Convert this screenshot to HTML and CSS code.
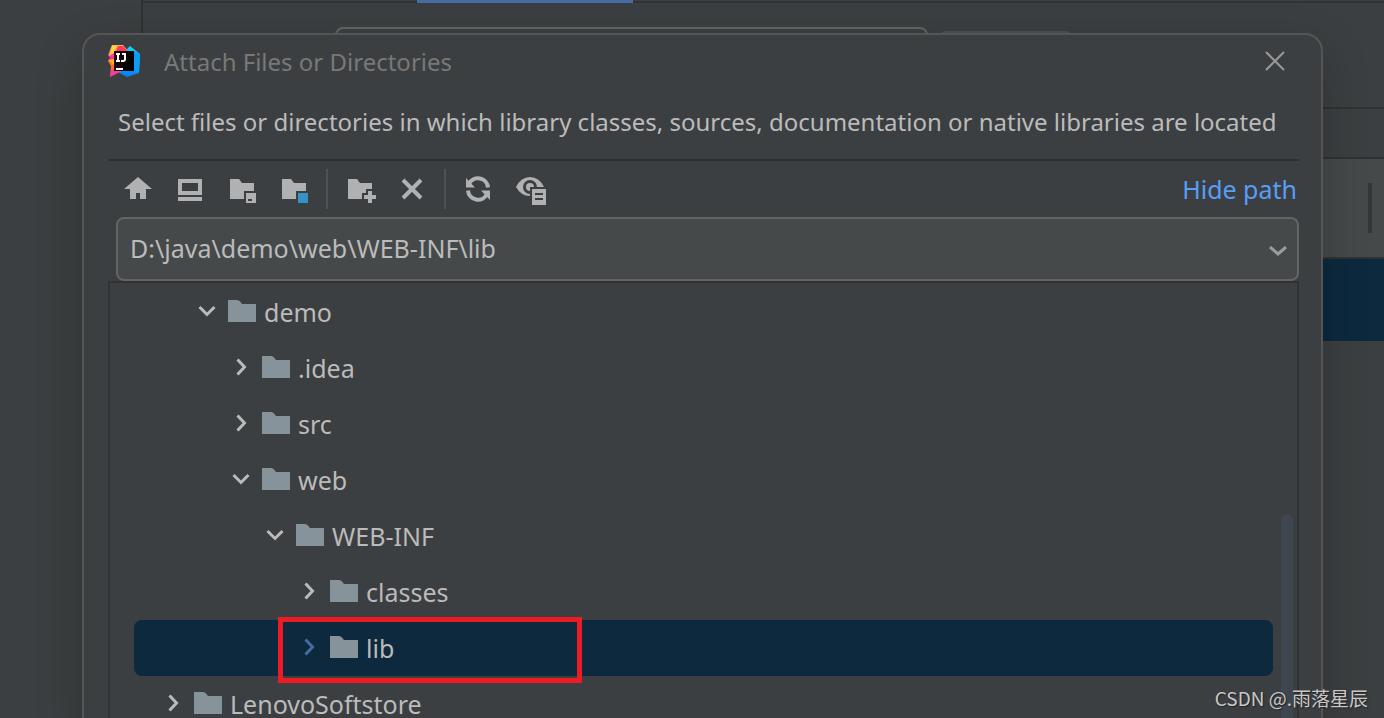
FILE: index.html
```html
<!DOCTYPE html>
<html lang="en">

<head>
    <meta charset="utf-8">
    <title>Attach Files or Directories</title>
    <link rel="stylesheet" href="styles.css">
</head>

<body>
    <svg class="defs" aria-hidden="true">
        <symbol id="folder" viewBox="0 0 28 28">
            <path fill="currentColor" d="M0 2h9q2 0 3 1.5L14 6h14v18H0z"/>
        </symbol>
        <symbol id="right" viewBox="0 0 24 28">
            <path fill="none" stroke="currentColor" stroke-width="3" d="M7.500 5.500l7 7.500l-7 7.500"/>
        </symbol>
        <symbol id="down" viewBox="0 0 24 28">
            <path fill="none" stroke="currentColor" stroke-width="3" d="M3.500 9l7.500 7.500L18.500 9"/>
        </symbol>
    </svg>

    <div class="screen">
        <div class="backdrop">
            <div class="side"></div>
            <div class="main">
                <div class="tabs"><div class="tab"></div></div>
                <div class="fields">
                    <div class="field"></div>
                    <div class="chip"></div>
                </div>
                <div class="strip"></div>
                <div class="bar"><div class="grip"></div></div>
                <div class="current"></div>
            </div>
        </div>

        <div class="dialog" role="dialog" aria-labelledby="title">
            <header class="titlebar">
                <svg class="logo" viewBox="0 0 32 32">
                    <defs>
                        <linearGradient id="warm" x1="0" y1="0" x2="0" y2="1">
                            <stop offset="0" stop-color="#fdb850"/>
                            <stop offset=".4" stop-color="#fa28b8"/>
                            <stop offset=".6" stop-color="#fc801d"/>
                            <stop offset="1" stop-color="#fe2d6c"/>
                        </linearGradient>
                        <linearGradient id="cool" x1="0" y1="0" x2="0" y2="1">
                            <stop offset="0" stop-color="#0fd8f8"/>
                            <stop offset="1" stop-color="#087cfa"/>
                        </linearGradient>
                        <linearGradient id="tile">
                            <stop offset="0" stop-color="#2a0814"/>
                            <stop offset=".5" stop-color="#000"/>
                        </linearGradient>
                    </defs>
                    <path fill="url(#cool)" d="M16 7L22 1l10 8-1 19-12 4-9-5z"/>
                    <path fill="#0c9cf4" d="M26 6l6 3-1 19-5-3z"/>
                    <path fill="url(#warm)" d="M4 0h11l5 6-10 17-8 9 1-11-3-5 2-3-2-3z"/>
                    <path fill="#fd3a5e" d="M10 1h5l5 6H8z"/>
                    <path fill="#fdd23a" d="M4 1l5 0-3 7-5 3z"/>
                    <path fill="#fdb60d" d="M0 15l6-1v6z"/>
                    <path fill="#f0419e" d="M6 26l8 0-12 6 1-7z"/>
                    <path fill="url(#tile)" d="M6 6h20v20H6z"/>
                    <path fill="none" stroke="#fff" stroke-width="2" d="M8 9h4M10 9v7M8 16h4M14 9h3v5q0 2-2 2h-2M8 24h7"/>
                </svg>
                <h1 class="title" id="title">Attach Files or Directories</h1>
                <button class="close" aria-label="Close">
                    <svg viewBox="0 0 20 20"><path fill="none" stroke="currentColor" stroke-width="2" d="M1 1l18 18M19 1L1 19"/></svg>
                </button>
            </header>

            <p class="message">Select files or directories in which library classes, sources, documentation or native libraries are located</p>

            <div class="toolbar">
                <button class="tool" aria-label="Home">
                    <svg viewBox="0 0 32 32"><path d="M16 4l14 12h-6v10h-6v-6h-4v6H8V16H2z"/></svg>
                </button>
                <button class="tool" aria-label="Desktop">
                    <svg viewBox="0 0 32 32"><path fill-rule="evenodd" d="M4 6h24v16H4zM8 10v8h16v-8zM4 24h24v4H4z"/></svg>
                </button>
                <button class="tool" aria-label="Project directory">
                    <svg viewBox="0 0 32 32"><path fill-rule="evenodd" d="M4 6h9l3 4h12v8H18v8H4zM20 20h10v10H20zM22 26v2h4v-2z"/></svg>
                </button>
                <button class="tool" aria-label="Module directory">
                    <svg viewBox="0 0 32 32"><path d="M4 6h9l3 4h12v8H18v8H4z"/><path class="accent" d="M20 20h10v10H20z"/></svg>
                </button>
                <span class="separator"></span>
                <button class="tool" aria-label="New folder">
                    <svg viewBox="0 0 32 32"><path d="M4 6h9l3 4h12v6h-6v4h-4v6H4zM24 18h4v4h4v4h-4v4h-4v-4h-4v-4h4z"/></svg>
                </button>
                <button class="tool" aria-label="Delete">
                    <svg viewBox="0 0 32 32"><path fill="none" stroke="currentColor" stroke-width="4" d="M7 7l18 18M25 7L7 25"/></svg>
                </button>
                <span class="separator"></span>
                <button class="tool" aria-label="Refresh">
                    <svg viewBox="0 0 32 32">
                        <path fill="none" stroke="currentColor" stroke-width="4" d="M7 11A10 10 0 0 1 26 14.500M25 21A10 10 0 0 1 6 17.500"/>
                        <path d="M4 5l9 9.500H4zM28 27l-9-9.500h9z"/>
                    </svg>
                </button>
                <button class="tool" aria-label="Show hidden files">
                    <svg viewBox="0 0 32 32">
                        <path fill-rule="evenodd" d="M2 14Q7 4 16 4t14 10q-5 9-14 9T2 14zM16 7a7 7 0 1 0 0 14a7 7 0 0 0 0-14z"/>
                        <circle cx="16" cy="14" r="4"/>
                        <path class="gap" d="M16 14h16v18H16z"/>
                        <path fill-rule="evenodd" d="M18 16h14v16H18zM21 20v2h8v-2zM21 25v2h8v-2z"/>
                    </svg>
                </button>
                <a class="link" href="#path">Hide path</a>
            </div>

            <div class="combo">
                <input class="path" id="path" type="text" aria-label="Path" value="D:\java\demo\web\WEB-INF\lib">
                <button class="open" aria-label="Recent paths">
                    <svg viewBox="0 0 18 10"><path fill="none" stroke="currentColor" stroke-width="3" d="M1 1l8 7 8-7"/></svg>
                </button>
            </div>

            <div class="tree">
                <ul class="rows">
                    <li class="row level-1"><button class="toggle" aria-label="Collapse demo"><svg><use href="#down"/></svg></button><svg class="folder"><use href="#folder"/></svg>demo</li>
                    <li class="row level-2"><button class="toggle" aria-label="Expand .idea"><svg><use href="#right"/></svg></button><svg class="folder"><use href="#folder"/></svg>.idea</li>
                    <li class="row level-2"><button class="toggle" aria-label="Expand src"><svg><use href="#right"/></svg></button><svg class="folder"><use href="#folder"/></svg>src</li>
                    <li class="row level-2"><button class="toggle" aria-label="Collapse web"><svg><use href="#down"/></svg></button><svg class="folder"><use href="#folder"/></svg>web</li>
                    <li class="row level-3"><button class="toggle" aria-label="Collapse WEB-INF"><svg><use href="#down"/></svg></button><svg class="folder"><use href="#folder"/></svg>WEB-INF</li>
                    <li class="row level-4"><button class="toggle" aria-label="Expand classes"><svg><use href="#right"/></svg></button><svg class="folder"><use href="#folder"/></svg>classes</li>
                    <li class="row level-4 selected"><button class="toggle" aria-label="Expand lib"><svg><use href="#right"/></svg></button><svg class="folder"><use href="#folder"/></svg>lib<span class="marker"></span></li>
                    <li class="row level-0"><button class="toggle" aria-label="Expand LenovoSoftstore"><svg><use href="#right"/></svg></button><svg class="folder"><use href="#folder"/></svg>LenovoSoftstore</li>
                </ul>
                <div class="scrollbar"></div>
            </div>
        </div>

        <div class="watermark">CSDN @.雨落星辰</div>
    </div>
</body>

</html>
```

FILE: styles.css
```css
* {
    box-sizing: border-box;
}

body {
    margin: 0;
    background-color: #3c3f41;
    color: #bbb;
    font-family: "Noto Sans", "Open Sans", sans-serif;
    font-size: 25px;
}

button {
    padding: 0;
    border: 0;
    background: none;
    color: inherit;
    display: flex;
}

.defs {
    display: none;
}

.screen {
    position: relative;
    height: 100vh;
    overflow: hidden;
}

/* window behind the dialog */

.backdrop {
    display: flex;
    height: 100%;
}

.side {
    width: 143px;
    border-right: 2px solid #323232;
}

.main {
    flex: 1;
}

.tabs {
    height: 3px;
    padding-left: 274px;
    border-bottom: 2px solid #323232;
}

.tab {
    width: 216px;
    height: 3px;
    background-color: #466ba1;
}

.fields {
    display: flex;
    align-items: flex-start;
    gap: 12px;
    height: 104px;
    padding: 24px 0 0 192px;
}

.field {
    width: 593px;
    height: 60px;
    border: 2px solid #646464;
    border-radius: 8px;
}

.chip {
    width: 132px;
    height: 52px;
    margin-top: 4px;
    border-radius: 6px;
    background-color: #4c5052;
}

.strip {
    height: 52px;
    border: solid #323232;
    border-width: 2px 0;
}

.bar {
    display: flex;
    align-items: center;
    justify-content: flex-end;
    height: 100px;
    padding-right: 12px;
    border-bottom: 2px solid #323232;
    background-color: #45494a;
}

.grip {
    width: 4px;
    height: 50px;
    background-color: #35383a;
}

.current {
    height: 82px;
    background-color: #0d293e;
}

/* dialog */

.dialog {
    position: absolute;
    top: 33px;
    left: 82px;
    right: 61px;
    padding: 0 22px 0 24px;
    border: 2px solid #555;
    border-radius: 18px;
    background-color: #3c3f41;
    box-shadow: 0 16px 48px rgba(0, 0, 0, 0.2);
}

.titlebar {
    display: flex;
    align-items: center;
    gap: 24px;
    height: 52px;
    padding-right: 14px;
}

.logo {
    width: 32px;
    height: 32px;
}

.title {
    flex: 1;
    margin: 0;
    color: #787878;
    font-size: 24px;
    font-weight: normal;
}

.close {
    color: #999;
}

.close svg {
    width: 20px;
    height: 20px;
}

.message {
    height: 74px;
    margin: 0;
    padding-left: 10px;
    border-bottom: 2px solid #2d2f30;
    font-size: 24px;
    line-height: 70px;
    white-space: nowrap;
}

.toolbar {
    display: flex;
    align-items: center;
    gap: 20px;
    height: 56px;
    padding: 0 2px 0 14px;
}

.tool {
    color: #afb1b3;
}

.tool svg {
    width: 32px;
    height: 32px;
    fill: currentColor;
}

.tool .accent {
    fill: #3592c4;
}

.tool .gap {
    fill: #3c3f41;
}

.separator {
    width: 2px;
    height: 40px;
    margin: 0 -4px;
    background-color: #515151;
}

.link {
    margin-left: auto;
    color: #589df6;
    text-decoration: none;
}

.combo {
    display: flex;
    align-items: center;
    height: 64px;
    margin-left: 8px;
    padding: 0 10px 0 12px;
    border: 2px solid #646464;
    border-radius: 8px;
    background-color: #45494a;
}

.path {
    flex: 1;
    padding: 0 0 2px;
    border: 0;
    outline: 0;
    background: none;
    color: inherit;
    font: inherit;
}

.open {
    padding-top: 4px;
    color: #9a9da0;
}

.open svg {
    width: 18px;
    height: 10px;
}

.tree {
    position: relative;
    padding: 1px 24px 0;
    border: 2px solid #323232;
}

.rows {
    margin: 0;
    padding: 0;
    list-style: none;
}

.row {
    position: relative;
    display: flex;
    align-items: center;
    gap: 8px;
    height: 56px;
    border-radius: 8px;
}

.level-0 { padding-left: 28px; }
.level-1 { padding-left: 62px; }
.level-2 { padding-left: 96px; }
.level-3 { padding-left: 130px; }
.level-4 { padding-left: 164px; }

.toggle svg {
    width: 24px;
    height: 28px;
}

.folder {
    width: 28px;
    height: 28px;
    color: #87939a;
}

.selected {
    background-color: #0d293e;
}

.selected .toggle {
    color: #466ba1;
}

.marker {
    position: absolute;
    top: -3px;
    left: 144px;
    width: 304px;
    height: 66px;
    border: 5px solid #ed1c24;
}

.scrollbar {
    position: absolute;
    top: 231px;
    right: 4px;
    bottom: 0;
    width: 12px;
    border-radius: 6px;
    background-color: #3e4750;
}

.watermark {
    position: absolute;
    right: 16px;
    bottom: 7px;
    color: #c8c8c8;
    font-family: "Noto Sans CJK SC", sans-serif;
    font-size: 19px;
    line-height: 26px;
    text-shadow: 1px 1px 1px #222;
}
```
